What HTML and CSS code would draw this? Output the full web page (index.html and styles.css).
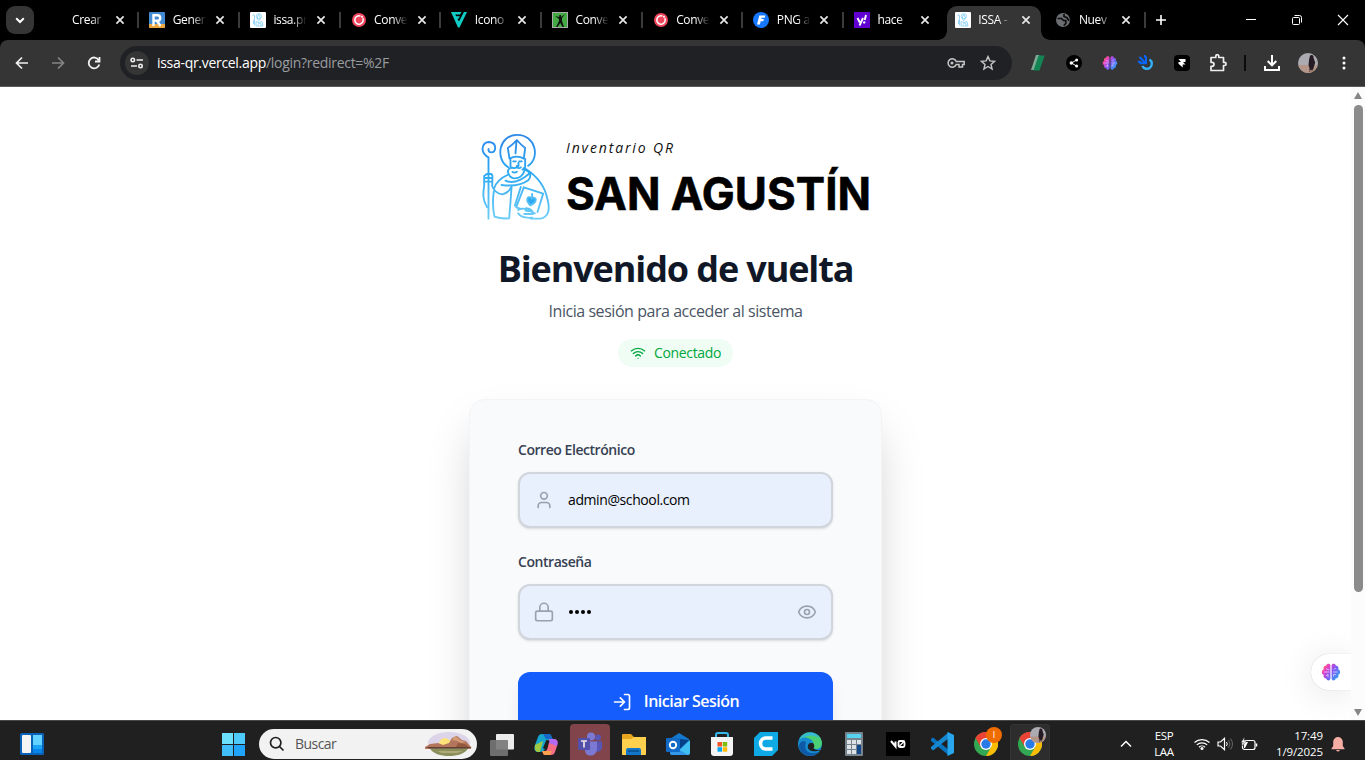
FILE: index.html
```html
<!DOCTYPE html>
<html lang="es">
<head>
<meta charset="utf-8">
<title>ISSA - Inventario QR</title>
<link rel="stylesheet" href="styles.css">
</head>
<body>
<svg class="defs" width="0" height="0" aria-hidden="true">
  <defs>
    <linearGradient id="brainFill" x1="0" y1=".1" x2="1" y2=".8"><stop offset="0" stop-color="#ff8a3c"/><stop offset=".25" stop-color="#ee3fc0"/><stop offset=".55" stop-color="#8457f5"/><stop offset="1" stop-color="#26a9f5"/></linearGradient>
    <linearGradient id="saintStroke" gradientUnits="userSpaceOnUse" x1="0" y1="15" x2="0" y2="275"><stop offset="0" stop-color="#2f86e8"/><stop offset=".45" stop-color="#2da9f3"/><stop offset="1" stop-color="#6dcdf6"/></linearGradient>
    <symbol id="close" viewBox="0 0 10 10"><path d="M1.4 1.4l7.2 7.2M8.6 1.4L1.4 8.6" stroke="#e8e8e8" stroke-width="1.7"/></symbol>
    <symbol id="issa" viewBox="0 0 16 16"><rect width="16" height="16" rx="1" fill="#fff"/><g fill="none" stroke="#7fcbf5" stroke-width=".8"><circle cx="8.800" cy="4.300" r="2.600"/><path d="M4.500 13.500V4c0-2-2-1.500-1.500 0M7.500 5l1.300-2.500 1.300 2.500v2.500L8.800 8.500 7.500 7.500zM6 9.500l3 1 3-1 1 4.500H6zM8 13l1-2 2.500 1-1 2M3.500 8v4"/></g></symbol>
    <symbol id="convert" viewBox="0 0 16 16"><circle cx="8" cy="8" r="7" fill="#f0455c"/><path d="M11.800 6.200A4.200 4.200 0 1 1 9.500 4.100" fill="none" stroke="#fff" stroke-width="1.500"/><circle cx="11" cy="4.800" r="1" fill="#fff"/></symbol>
    <symbol id="brain" viewBox="0 0 20 20"><path d="M9.400 3.200C8.500 1 5.600 1.300 5.200 3.400 2.900 3.500 1.900 5.500 2.800 7.200.2 8.500.3 11.700 2.600 12.700 2 15 3.500 16.400 5.200 16.500 6 19 8.800 19 9.400 16.700zM10.600 3.200C11.500 1 14.400 1.300 14.800 3.400 17.100 3.500 18.100 5.500 17.200 7.200 19.800 8.500 19.700 11.700 17.400 12.700 18 15 16.500 16.400 14.800 16.500 14 19 11.200 19 10.600 16.700z" fill="url(#brainFill)"/><path d="M3 10h5.400M5 6.500l2 1.200h1.400M5 13.800l2-1.500v3M12 10h4.500M12.800 7.500l2.200-1.500M12.500 14.500v-2h2.600" fill="none" stroke="#ddd3ff" stroke-width=".8"/></symbol>
    <symbol id="chrome" viewBox="0 0 24 24"><circle cx="12" cy="12" r="12" fill="#33a852"/><path d="M12 12L1.600 6A12 12 0 0 1 22.400 6z" fill="#ea4335"/><path d="M12 6h10.400A12 12 0 0 1 12 24l5.200-9z" fill="#fbbc04"/><path d="M1.600 6A12 12 0 0 1 22.400 6H12L6.800 15z" fill="#ea4335"/><circle cx="12" cy="12" r="6" fill="#fff"/><circle cx="12" cy="12" r="4.700" fill="#287ae6"/></symbol>
    <symbol id="avatar" viewBox="0 0 20 20"><circle cx="10" cy="10" r="10" fill="#adabb2"/><path d="M.4 12h19.200A10 10 0 0 1 10 20 10 10 0 0 1 .4 12z" fill="#b49688"/><path d="M12 2.500c2-1.500 4 0 3.500 2.200l1.700 4.800-1.200 4-1 3.500h-3l-1.500-5 .5-5z" fill="#251b24"/><path d="M11.500 16l.5 3M14 16v2.500" stroke="#684538"/></symbol>
    <symbol id="wifi" viewBox="0 0 24 24"><path d="M12 20h.01M2 8.820a15 15 0 0 1 20 0M5 12.859a10 10 0 0 1 14 0M8.500 16.429a5 5 0 0 1 7 0" fill="none" stroke="currentColor" stroke-width="2" stroke-linecap="round"/></symbol>
  </defs>
</svg>

<div class="screen">
  <header class="tabstrip">
    <button class="tab-search"><svg width="10" height="7" viewBox="0 0 10 7"><path d="M1.200 1.300L5 5l3.800-3.700" fill="none" stroke="#fff" stroke-width="2"/></svg></button>
    <div class="tabs">
      <div class="tab"><span class="fav"></span><span class="title">Crear</span><svg class="x"><use href="#close"/></svg></div>
      <div class="tab"><svg class="fav" viewBox="0 0 16 16"><rect width="16" height="16" rx="1" fill="#438bd2"/><path d="M0 12h16v3q0 1-1 1H1q-1 0-1-1z" fill="#eea640"/><path d="M4.500 14V3.200h4a2.700 2.700 0 0 1 0 5.400h-4M8 9l3.500 5" fill="none" stroke="#fff" stroke-width="2.400"/></svg><span class="title">Gener</span><svg class="x"><use href="#close"/></svg></div>
      <div class="tab"><svg class="fav"><use href="#issa"/></svg><span class="title">issa.pr</span><svg class="x"><use href="#close"/></svg></div>
      <div class="tab"><svg class="fav"><use href="#convert"/></svg><span class="title">Conve</span><svg class="x"><use href="#close"/></svg></div>
      <div class="tab"><svg class="fav" viewBox="0 0 16 16"><path d="M0 0h10.500L9 2.600H4.200l1 1.700h3.700L7.600 6.700H6.400L8 9.500 12.900 0H16L8.500 15.500H7z" fill="#12cdc6"/></svg><span class="title">Icono</span><svg class="x"><use href="#close"/></svg></div>
      <div class="tab"><svg class="fav" viewBox="0 0 16 16"><rect x=".5" y=".5" width="15" height="15" fill="#43aa43" stroke="#aaa"/><path d="M3 4l4 1 .5-2h1.500v2l4-3-3 4v3l2 6h-1.500L8.300 11 5.500 15H4l3-6V7z" fill="#111"/></svg><span class="title">Conve</span><svg class="x"><use href="#close"/></svg></div>
      <div class="tab"><svg class="fav"><use href="#convert"/></svg><span class="title">Conve</span><svg class="x"><use href="#close"/></svg></div>
      <div class="tab"><svg class="fav" viewBox="0 0 16 16"><circle cx="8" cy="8" r="8" fill="#1677ff"/><path d="M4 12.500L6.300 3.500h6l-.6 2.300H8.600L8.300 7h2.600l-.6 2.200H7.700l-.8 3.300z" fill="#fff"/></svg><span class="title">PNG a</span><svg class="x"><use href="#close"/></svg></div>
      <div class="tab"><svg class="fav" viewBox="0 0 16 16"><rect width="16" height="16" fill="#6001d2"/><path d="M3.500 6l2.300 4.500M9 6l-3.500 7.500M12 3l-1.300 5" stroke="#fff" stroke-width="1.900"/><circle cx="10.200" cy="10.400" r="1.200" fill="#fff"/></svg><span class="title">hace</span><svg class="x"><use href="#close"/></svg></div>
      <div class="tab active"><svg class="fav"><use href="#issa"/></svg><span class="title">ISSA -</span><svg class="x"><use href="#close"/></svg></div>
      <div class="tab"><svg class="fav" viewBox="0 0 16 16"><circle cx="8" cy="8" r="7" fill="#6a6d71"/><path d="M2.500 6.500h4l2 2h2.300v3l-2 2M9 2v2.500l3 1.200 2 3" fill="none" stroke="#0c0c0d" stroke-width="1.700"/></svg><span class="title">Nuev</span><svg class="x"><use href="#close"/></svg></div>
    </div>
    <button class="newtab"><svg width="12" height="12" viewBox="0 0 12 12"><path d="M6 1v10M1 6h10" stroke="#fff" stroke-width="1.600"/></svg></button>
    <div class="winctl">
      <svg viewBox="0 0 12 12"><path d="M1 5.500h10" stroke="#fff"/></svg>
      <svg viewBox="0 0 12 12"><rect x="1.500" y="3.500" width="7" height="7" rx="1" fill="none" stroke="#fff"/><path d="M3.500 1.500h5q2 0 2 2v5" fill="none" stroke="#fff"/></svg>
      <svg viewBox="0 0 12 12"><path d="M1 1l10 10M11 1L1 11" stroke="#fff" stroke-width="1.100"/></svg>
    </div>
  </header>

  <div class="toolbar">
    <div class="nav">
      <svg viewBox="0 0 16 16"><path d="M14 8H3M8 2.500L2.500 8 8 13.500" fill="none" stroke="#f1f1f1" stroke-width="1.700"/></svg>
      <svg viewBox="0 0 16 16"><path d="M2 8h11M8 2.500L13.500 8 8 13.500" fill="none" stroke="#858585" stroke-width="1.700"/></svg>
      <svg viewBox="0 0 16 16"><path d="M12.800 5.200A5.400 5.400 0 1 0 13.300 9.500M13.500 2v4.500H9" fill="none" stroke="#f1f1f1" stroke-width="1.800"/></svg>
    </div>
    <div class="omnibox">
      <span class="site"><svg width="14" height="12" viewBox="0 0 14 12"><g fill="none" stroke="#eee" stroke-width="1.600"><circle cx="2.800" cy="3" r="1.700"/><path d="M6.500 3H13M1 9h6"/><circle cx="10.500" cy="9" r="1.700"/></g></svg></span>
      <span class="url"><b>issa-qr.vercel.app</b>/login?redirect=%2F</span>
      <svg class="key" viewBox="0 0 18 10"><path d="M9.200 3.500A4.200 4.200 0 1 0 9.200 6.500H12V9h3.500V6.500H17.200v-3z" fill="none" stroke="#c4c7c5" stroke-width="1.500"/><circle cx="5" cy="5" r="1.500" fill="#c4c7c5"/></svg>
      <svg class="star" viewBox="0 0 16 16"><path d="M8 1.600l1.900 4.300 4.700.4-3.600 3.100 1.100 4.600L8 11.500 3.900 14 5 9.400 1.400 6.300l4.700-.4z" fill="none" stroke="#c4c7c5" stroke-width="1.400"/></svg>
    </div>
    <div class="exts">
      <svg viewBox="0 0 16 16"><path d="M6 0h3.500L4.500 15H1z" fill="#7ea993"/><path d="M8.500.5h6.200L9.500 15.500H3.500z" fill="#138454"/></svg>
      <svg viewBox="0 0 16 16"><circle cx="8" cy="8" r="8" fill="#000"/><path d="M10.500 5L5.500 8l5 3" fill="none" stroke="#fff"/><circle cx="10.600" cy="5" r="1.500" fill="#fff"/><circle cx="5.300" cy="8" r="1.700" fill="#fff"/><circle cx="10.600" cy="11" r="1.500" fill="#fff"/></svg>
      <svg><use href="#brain"/></svg>
      <svg viewBox="0 0 16 16"><path d="M11.500 4.600A5 5 0 1 1 4.300 11" fill="none" stroke="#32b0f8" stroke-width="2.400"/><path d="M1.500 2l6 6M6.500 0L8 3.500M0 6.500l3.500 1.200M1.500 8.300H8V1.500" fill="none" stroke="#0967ff" stroke-width="2"/></svg>
      <svg viewBox="0 0 16 16"><rect width="16" height="16" rx="4" fill="#000"/><path d="M4.500 4h7v3H9l2.500 2.500H8.700v3L4.500 8.700V7H7z" fill="#fff"/></svg>
      <svg viewBox="0 0 18 18"><path d="M2 3.500h4.800V2.200a1.500 1.500 0 0 1 3 0v1.300h4.700v4.800h1a1.600 1.600 0 0 1 0 3.200h-1v5H2v-4.200h1a2 2 0 0 0 0-4H2z" fill="none" stroke="#eee" stroke-width="1.700" stroke-linejoin="round"/></svg>
    </div>
    <span class="bar"></span>
    <svg class="dl" viewBox="0 0 16 16"><path d="M8 0v10M3.700 6L8 10.300 12.300 6M1 11v4h14v-4" fill="none" stroke="#fff" stroke-width="2"/></svg>
    <svg class="me"><use href="#avatar"/></svg>
    <svg class="kebab" viewBox="0 0 4 16"><g fill="#fff"><circle cx="2" cy="3" r="1.500"/><circle cx="2" cy="8" r="1.500"/><circle cx="2" cy="13" r="1.500"/></g></svg>
  </div>

  <div class="viewport">
    <main class="page">
      <svg class="logo" width="396" height="92" viewBox="0 0 396 92" role="img" aria-label="Inventario QR San Agustín">
        <g transform="translate(-3.500 -4) scale(.3333)" fill="none" stroke="url(#saintStroke)" stroke-width="5.600" stroke-linecap="round" stroke-linejoin="round">
          <path d="M98 118C58 92 70 21 125 20.500c55 0 70 68 33 93"/>
          <path d="M102 92L97 60Q113 49 124 36q12 14 25 24l-4 32Q124 80 102 92zM123 38l-3 38"/>
          <path d="M105 95v22M149 93v24l-8 8M113 100h8M131 100h8M129 104v10h-5M97 132q1-12 13-13 7 3 13-1 8 5 13 0M97 132q5 17 18 19 25 1 33-26M111 132q7 4 13-1"/>
          <path d="M39 272V88Q22 80 21 62q2-20 20-20 18 2 18 17 0 14-12 14-9-1-8-10"/>
          <path d="M26 174V144l8-6h14l3 6-1 30M28 150h20M29 161h20M26 176q-8 35 9 62M50 174q8 22 30 25 20-4 28-23"/>
          <path d="M96 141q-32 14-40 40M55 190q-6 40 2 76 20 7 44 5 4-46 7-93"/>
          <path d="M150 122q55 35 66 92 13 50-20 58h-30M148 124q26 12 11 32-28 22-81 15M160 138q-40 34-70 20"/>
          <path d="M145 178l58 19-17 55M145 178l-23 60 14 5M136 177l-18 56M150 248l10 2"/>
          <path d="M128 246q16-9 34 2l16 8M128 256q10 16 42 13M146 258h26M150 241q12-1 20 8"/>
          <path d="M164 232q-14-16-6-24 8-2 11 4 8-6 12 2-1 12-17 18zM170 198v8" fill="#2da9f3"/>
        </g>
        <text class="logo-sub" x="87" y="21" textLength="107">Inventario QR</text>
        <text class="logo-name" x="87" y="78" textLength="305" lengthAdjust="spacingAndGlyphs">SAN AGUSTÍN</text>
      </svg>
      <h1>Bienvenido de vuelta</h1>
      <p class="lead">Inicia sesión para acceder al sistema</p>
      <div class="status"><svg><use href="#wifi"/></svg><span>Conectado</span></div>

      <form class="card">
        <label>Correo Electrónico</label>
        <div class="field">
          <svg class="ficon" viewBox="0 0 24 24"><path d="M19 21v-2a4 4 0 0 0-4-4H9a4 4 0 0 0-4 4v2"/><circle cx="12" cy="7" r="4"/></svg>
          <span class="value">admin@school.com</span>
        </div>
        <label>Contraseña</label>
        <div class="field">
          <svg class="ficon" viewBox="0 0 24 24"><rect x="2" y="11" width="20" height="11.500" rx="2"/><path d="M7 11V6.500a5 5 0 0 1 10 0V11"/></svg>
          <span class="value dots"><i></i><i></i><i></i><i></i></span>
          <svg class="ficon" viewBox="0 0 24 24"><path d="M2.062 12.348a1 1 0 0 1 0-.696 10.750 10.750 0 0 1 19.876 0 1 1 0 0 1 0 .696 10.750 10.750 0 0 1-19.876 0"/><circle cx="12" cy="12" r="3"/></svg>
        </div>
        <div class="submit">
          <svg viewBox="0 0 24 24"><path d="M10 17l5-5-5-5M15 12H3M15 3h4a2 2 0 0 1 2 2v14a2 2 0 0 1-2 2h-4"/></svg>
          <span>Iniciar Sesión</span>
        </div>
      </form>
      <div class="assistant"><svg width="20" height="20"><use href="#brain"/></svg></div>
    </main>
    <div class="scroll"><i class="up"></i><i class="thumb"></i><i class="down"></i></div>
  </div>

  <footer class="taskbar">
    <svg class="widgets" viewBox="0 0 24 22"><rect width="24" height="22" rx="1.500" fill="#0762b8"/><rect x="2" y="2" width="9" height="18" rx="1" fill="#f4f4f4"/><path d="M13 2h9v10h-9z" fill="#64d2ff"/><path d="M13 12h9v4h-9z" fill="#1ba4f5"/><path d="M13 16h9v4h-9z" fill="#0884ea"/></svg>
    <svg class="start" viewBox="0 0 23 23"><path d="M0 0h11v11H0z" fill="#6be1fb"/><path d="M12 0h11v11H12z" fill="#4dcafa"/><path d="M0 12h11v11H0z" fill="#3fbef9"/><path d="M12 12h11v11H12z" fill="#20a3fa"/></svg>
    <div class="search">
      <svg class="mag" viewBox="0 0 16 16"><circle cx="6.700" cy="6.700" r="5.200"/><path d="M10.500 10.500l4 4"/></svg>
      <span>Buscar</span>
      <svg class="scene" viewBox="0 0 48 25"><ellipse cx="24" cy="11" rx="21" ry="11" fill="#dcd4e8"/><circle cx="20" cy="12" r="6" fill="#ffe179"/><path d="M0 15l5-3 8-1 5 2 6-2 3-5 5-2 5 4 4 1 5 6v2H0z" fill="#b3765c"/><path d="M27 8l3-4 3 2 2 2 6 2-5 1-4-2z" fill="#d39a76"/><path d="M33 11l7 1 4 3H31z" fill="#94583f"/><path d="M1 15h46l-6 2H6z" fill="#633e37"/><path d="M5 16.500h38c-5 10-33 10-38 0z" fill="#8a8f5b"/><path d="M12 19h26l-6 2H17z" fill="#b0aa78"/></svg>
    </div>
    <div class="apps">
      <span><svg viewBox="0 0 24 24"><rect x="6" y="2" width="18" height="15.500" rx="1" fill="#ececec"/><rect y="8" width="18" height="16" rx="1" fill="#777" opacity=".9"/></svg></span>
      <span><svg viewBox="0 0 24 24"><path d="M8 2h7c3 0 2 4 4 5l-5 1-3 9c-1 2-3 3-5 3H4c-4 0-4-4-3-7l3-8q1-3 4-3z" fill="#16a5cc"/><path d="M9 2h6c3 0 2 4 4 5h-7z" fill="#1567c8"/><path d="M1 13l8-4-3 11H4q-4 0-3-7z" fill="#9dc943"/><path d="M15 7h5c4 0 4 4 3 7l-2 6q-1 3-4 3h-6c-2 0-2-3-3-4h3c2 0 2-2 3-4z" fill="#f66e85"/><path d="M15 7h5c4 0 4 4 3 7l-8-3z" fill="#b36af2"/><path d="M8 19h10l-2 4h-5c-2 0-2-3-3-4z" fill="#ffa24d"/><path d="M14 8.500l-3.500 8.500" stroke="#202020" stroke-width="3.500"/></svg></span>
      <span class="alert"><svg viewBox="0 0 24 24"><circle cx="13" cy="4.500" r="4" fill="#7b83eb"/><circle cx="20" cy="5.500" r="3" fill="#5059c9"/><path d="M16 9.500h8v6q-1 5-6 4z" fill="#5059c9"/><path d="M7 9.500h12v8q-1 6-6.500 6T7 18z" fill="#7b83eb"/><rect y="6" width="12" height="12" rx="1" fill="#4b53bc"/><path d="M3 9h6M6 9v6.500" stroke="#fff" stroke-width="1.700"/></svg></span>
      <span><svg viewBox="0 0 24 24"><path d="M0 3q0-1 1-1h8l3 3h11q1 0 1 1v16q0 1-1 1H1q-1 0-1-1z" fill="#e8a51f"/><path d="M0 7h9l3-2h12v17q0 1-1 1H1q-1 0-1-1z" fill="#ffd04d"/><path d="M4 23v-5q0-2 2-2h11q2 0 2 2v5z" fill="#1377c9"/><path d="M6 19h11" stroke="#0b4b8c" stroke-width="1.500"/></svg></span>
      <span><svg viewBox="0 0 24 24"><path d="M4 7l9-6 10 6v14q0 2-2 2H6q-2 0-2-2z" fill="#1479ce"/><path d="M13 7l10 1-9 9z" fill="#063f87"/><path d="M24 8v13q0 2-2 2H8z" fill="#42bff2"/><path d="M4 12l18 11H6q-2 0-2-2z" fill="#3297e8"/><rect y="6" width="14" height="14" rx="1" fill="#116bc6"/><circle cx="7" cy="13" r="3.200" fill="none" stroke="#fff" stroke-width="1.900"/></svg></span>
      <span><svg viewBox="0 0 24 24"><path d="M6 6V3q0-2 2-2h8q2 0 2 2v3" fill="none" stroke="#35b9ec" stroke-width="2"/><path d="M1 5h22v16q0 3-3 3H4q-3 0-3-3z" fill="#f4f4f4"/><path d="M7.500 10H12v4.500H7.500z" fill="#f35325"/><path d="M12.700 10h4.500v4.500h-4.500z" fill="#81bc06"/><path d="M7.500 15.200H12v4.500H7.500z" fill="#05a6f0"/><path d="M12.700 15.200h4.500v4.500h-4.500z" fill="#ffba08"/></svg></span>
      <span><svg viewBox="0 0 24 24"><path d="M6 0h18v18l-6 6H0V6z" fill="#0fa9e6"/><path d="M18.500 6H12a5.500 5.500 0 0 0 0 11h6.500" fill="none" stroke="#fff" stroke-width="3.500"/></svg></span>
      <span><svg viewBox="0 0 24 24"><circle cx="12" cy="12" r="12" fill="#168bcd"/><path d="M2 6C7-3 23-1 24 11q0 5-5 6-6 0-4-4c2-5-6-9-13-7z" fill="#4bcf75"/><path d="M1 8C7-2 19 0 21 6 14 1 7 4 1 8z" fill="#35b9dc"/><path d="M8 10c-3 8 3 14 12 10-5 7-17 4-19-5 0-4 3-7 7-5z" fill="#0d59a5"/><path d="M15 11c4 5-3 5 4 7h5l-5 1c-10 2-11-6-7-8z" fill="#202020"/></svg></span>
      <span><svg viewBox="0 0 24 24"><rect x="3" width="18" height="24" rx="1" fill="#77838c"/><path d="M5 2h14v4H5z" fill="#55d3ef"/><path d="M5 8h4v4H5zM10 8h4v4h-4zM15 8h4v4h-4zM5 13h4v4H5zM10 13h4v4h-4zM5 18h4v4H5zM10 18h4v4h-4z" fill="#dce2e6"/><path d="M15 13h4v9h-4z" fill="#12488a"/></svg></span>
      <span><svg viewBox="0 0 24 24"><path d="M0 0h24v24H0z" fill="#000"/><path d="M5 9l4.500 5.500V9.500" fill="none" stroke="#fff" stroke-width="2"/><rect x="12.500" y="9" width="6" height="6" rx="1.500" fill="none" stroke="#fff" stroke-width="1.800"/><path d="M13 14.500l5-5" stroke="#fff" stroke-width="1.300"/></svg></span>
      <span><svg viewBox="0 0 24 24"><path d="M1 7l2-1.500L19 18v5.500L1 9z" fill="#0873be"/><path d="M1 16.500L3 18.500 19 6V0L1 15z" fill="#1688d0"/><path d="M17.500 0L24 3v18l-6.500 3z" fill="#28a7ee"/></svg></span>
      <span><svg><use href="#chrome"/></svg><em class="badge orange">I</em></span>
      <span class="current"><svg><use href="#chrome"/></svg><em class="badge"><svg><use href="#avatar"/></svg></em></span>
    </div>
    <div class="tray">
      <svg class="chev" viewBox="0 0 12 8"><path d="M1 6.500L6 1.500l5 5" fill="none" stroke="#fff" stroke-width="1.500"/></svg>
      <span class="lang">ESP<br>LAA</span>
      <svg class="wifi" viewBox="0 0 16 12"><g fill="none" stroke="#fff" stroke-width="1.200"><path d="M.5 4.500a11 11 0 0 1 15 0M2.800 6.900a7.500 7.500 0 0 1 10.400 0M5 9.200a4.300 4.300 0 0 1 6 0"/></g><circle cx="8" cy="10.500" r="1.500" fill="#fff"/></svg>
      <svg class="vol" viewBox="0 0 16 14"><path d="M1 5h2.500L7.500 1.300v11.400L3.500 9H1z" fill="none" stroke="#fff" stroke-width="1.200"/><path d="M9.500 5q1.500 2 0 4" fill="none" stroke="#fff"/><path d="M11.500 3q3 4 0 8M13.500 1.500q4 5.500 0 11" fill="none" stroke="#666"/></svg>
      <svg class="bat" viewBox="0 0 17 14"><rect x="1.500" y="3.500" width="12.500" height="9" rx="2" fill="none" stroke="#fff" stroke-width="1.200"/><path d="M15.500 6.500v3" stroke="#fff" stroke-width="1.500"/><path d="M3 5h4l-3 6H3z" fill="#fff"/><path d="M3.500 0L0 5.500h2.300L1.500 9 5.500 4H3z" fill="#fff" stroke="#202020" stroke-width=".4"/></svg>
      <span class="clock">17:49<br>1/9/2025</span>
      <svg class="bell" viewBox="0 0 14 15"><path d="M7 0a4.800 4.800 0 0 0-4.800 4.800V9L.5 11.500v.7h13v-.7L11.800 9V4.800A4.800 4.800 0 0 0 7 0zM5 13h4q-2 3-4 0z" fill="#f6ada3"/></svg>
    </div>
  </footer>
</div>
</body>
</html>
```
FILE: styles.css
```css
* { box-sizing: border-box; }
body { margin: 0; overflow: hidden; font-family: "Open Sans", "Noto Sans", sans-serif; }
svg { display: block; flex: none; }
.defs { position: absolute; }
button { border: 0; padding: 0; background: none; display: flex; align-items: center; justify-content: center; }
.screen { width: 1365px; height: 760px; display: flex; flex-direction: column; background: #000; }

/* tab strip */
.tabstrip { height: 40px; flex: none; display: flex; align-items: center; padding-left: 6px; background: #000; }
.tab-search { width: 28px; height: 28px; border-radius: 9px; background: #353535; flex: none; }
.tabs { display: flex; height: 40px; margin-left: 3.5px; flex: none; }
.tab { width: 100.700px; height: 40px; display: flex; align-items: center; padding-left: 11px; position: relative; }
.tab::after { content: ""; position: absolute; right: -1px; top: 12px; width: 2px; height: 16px; background: #3b3b3b; }
.fav { width: 16px; height: 16px; flex: none; }
.title { width: 35px; margin-left: 7.500px; white-space: nowrap; font-size: 12px; line-height: 20px; letter-spacing: -.35px; color: #fff; -webkit-mask-image: linear-gradient(90deg, #000 55%, transparent 96%); mask-image: linear-gradient(90deg, #000 55%, transparent 96%); }
.x { width: 10px; height: 10px; margin-left: 7.500px; }
.tab.active::before { content: ""; position: absolute; left: 3px; right: 3px; top: 6px; bottom: 0; border-radius: 10px 10px 0 0; background: #353535; }
.tab.active > * { position: relative; }
.tab.active::after { left: -6px; right: -6px; top: auto; bottom: 0; width: auto; height: 9px; background: radial-gradient(circle at 0 0, transparent 8.500px, #353535 9px) left bottom / 9px 9px no-repeat, radial-gradient(circle at 100% 0, transparent 8.500px, #353535 9px) right bottom / 9px 9px no-repeat; }
.tab:has(+ .active)::after { display: none; }
.newtab { width: 34px; height: 34px; margin-left: -1px; }
.winctl { margin-left: auto; display: flex; gap: 34px; padding-right: 16px; }
.winctl svg { width: 12px; height: 12px; }

/* toolbar */
.toolbar { height: 47px; flex: none; display: flex; align-items: center; background: #353535; border-bottom: 1px solid #5a5a5a; border-radius: 8px 8px 0 0; }
.nav { width: 120px; display: flex; gap: 20px; padding-left: 14px; flex: none; }
.nav svg { width: 16px; height: 16px; }
.omnibox { width: 892px; height: 34px; border-radius: 17px; background: #202124; display: flex; align-items: center; padding: 0 16px 0 5px; flex: none; }
.site { width: 24px; height: 24px; border-radius: 50%; background: #353535; display: flex; align-items: center; justify-content: center; }
.url { margin-left: 8px; flex: 1; padding-bottom: 2px; font-size: 14px; letter-spacing: -.3px; color: #9a9da1; }
.url b { font-weight: 400; color: #fff; }
.key { width: 18px; height: 10px; }
.star { width: 16px; height: 16px; margin-left: 15px; }
.exts { display: flex; gap: 18px; margin-left: 17px; align-items: center; }
.exts svg { width: 18px; height: 16px; }
.exts svg:last-child { height: 18px; }
.bar { width: 2px; height: 16px; margin-left: 17px; background: #0b0b0b; }
.dl { width: 16px; height: 16px; margin-left: 18px; }
.me { width: 20px; height: 20px; margin-left: 18px; }
.kebab { width: 4px; height: 16px; margin-left: 24px; }

/* page */
.viewport { height: 633px; flex: none; display: flex; background: #fff; overflow: hidden; }
.page { width: 1351px; height: 633px; overflow: hidden; display: flex; flex-direction: column; align-items: center; padding-top: 45px; background: #fff; position: relative; }
.logo { margin-left: 2px; flex: none; }
.logo-sub { font: italic 400 14px "Open Sans", sans-serif; fill: #111; }
.logo-name { font: 700 45px Inter, sans-serif; fill: #000; stroke: #000; stroke-width: .6px; }
h1 { margin: 22px 0 0; font-size: 36px; line-height: 45px; font-weight: 700; letter-spacing: -1.120px; color: #101828; white-space: nowrap; }
.lead { margin: 8px 0 0; font-size: 16px; line-height: 24px; letter-spacing: -.450px; color: #4a5565; }
.status { margin-top: 16px; width: 115px; height: 28px; border-radius: 14px; background: #f0fdf4; color: #00a63e; font-size: 14px; letter-spacing: -.35px; display: flex; align-items: center; padding-left: 12px; gap: 8px; flex: none; }
.status svg { width: 16px; height: 16px; }
.status span { padding-bottom: 2px; }
.card { width: 413px; height: 420px; flex: none; margin: 32px 0 0; padding: 40px 48px; border: 1px solid #f3f4f6; border-radius: 16px; background: #f9fafb; box-shadow: 0 25px 50px -12px rgba(0, 0, 0, .25); }
.card label { display: block; height: 20px; margin-bottom: 12px; font-size: 14px; line-height: 20px; font-weight: 600; letter-spacing: -.450px; color: #364153; }
.field { height: 56px; margin-bottom: 24px; border: 2px solid #d1d5dc; border-radius: 12px; background: #e8f0fe; box-shadow: 0 1px 3px rgba(0, 0, 0, .1), 0 1px 2px -1px rgba(0, 0, 0, .1); display: flex; align-items: center; padding: 0 14px; }
.ficon { width: 20px; height: 20px; fill: none; stroke: #99a1af; stroke-width: 2; stroke-linecap: round; stroke-linejoin: round; }
.value { flex: 1; margin-left: 14px; padding-bottom: 2px; font-size: 14px; letter-spacing: -.4px; color: #000; }
.dots { display: flex; gap: 2px; padding: 0 0 0 1px; }
.dots i { width: 4px; height: 4px; border-radius: 50%; background: #000; }
.submit { height: 60px; margin-top: 32px; border-radius: 12px; background: #155dfc; color: #fff; display: flex; align-items: center; justify-content: center; gap: 12px; font-size: 16px; font-weight: 600; letter-spacing: -.5px; box-shadow: 0 10px 15px -3px rgba(0, 0, 0, .1); }
.submit span { padding-bottom: 2px; }
.submit svg { width: 20px; height: 20px; fill: none; stroke: #fff; stroke-width: 2; stroke-linecap: round; stroke-linejoin: round; }
.assistant { position: absolute; right: 0; top: 567px; width: 40px; height: 36px; border-radius: 18px 0 0 18px; background: #fff; display: flex; align-items: center; justify-content: center; box-shadow: 0 0 1px rgba(0, 0, 0, .25), 0 4px 35px rgba(0, 0, 0, .11); }
.scroll { width: 14px; background: #fcfcfc; display: flex; flex-direction: column; align-items: center; padding: 5px 0 4px; }
.up, .down { border: 4.500px solid transparent; height: 0; }
.up { border-top: 0; border-bottom: 7px solid #868686; }
.down { border-bottom: 0; border-top: 7px solid #868686; margin-top: auto; }
.thumb { width: 9px; height: 487px; margin-top: 6px; border-radius: 5px; background: #8b8b8b; }

/* taskbar */
.taskbar { height: 40px; flex: none; display: flex; align-items: center; background: #202020; border-top: 1px solid #484848; padding: 7px 0 0 20px; overflow: hidden; }
.widgets { width: 24px; height: 22px; }
.start { width: 23px; height: 23px; margin-left: 178px; }
.search { width: 218px; height: 30px; margin-left: 14px; border-radius: 15px; background: #f2f2f2; display: flex; align-items: center; padding: 0 4px 0 10px; flex: none; }
.mag { width: 16px; height: 16px; fill: none; stroke: #1f1f1f; stroke-width: 1.700; }
.search span { margin-left: 10px; flex: 1; padding-bottom: 1px; font-size: 14px; letter-spacing: -.55px; color: #555; }
.scene { width: 48px; height: 25px; }
.apps { display: flex; margin-left: 5px; flex: none; }
.apps > span { width: 40px; margin-right: 4px; height: 40px; display: flex; align-items: center; justify-content: center; position: relative; border-radius: 4px; }
.apps > span > svg { width: 24px; height: 24px; }
.alert { background: #81444a; }
.alert svg { opacity: .85; }
.current { background: #2d2d2d; box-shadow: inset 0 0 0 1px #343434; }
.badge { position: absolute; top: 3px; right: 4px; width: 16px; height: 16px; border-radius: 50%; font-size: 9px; line-height: 16px; text-align: center; font-style: normal; color: #fff; }
.orange { background: #ef6c00; }
.badge svg { width: 16px; height: 16px; }
.tray { margin-left: auto; display: flex; align-items: center; color: #fff; font-size: 11.500px; line-height: 16px; letter-spacing: -.1px; padding-right: 20px; }
.chev { width: 12px; height: 8px; }
.lang { width: 30px; margin-left: 17px; text-align: center; letter-spacing: -.3px; }
.wifi { width: 16px; height: 12px; margin-left: 15px; }
.vol { width: 16px; height: 14px; margin-left: 7px; }
.bat { width: 17px; height: 14px; margin-left: 8px; }
.clock { width: 58px; margin-left: 7px; text-align: right; }
.bell { width: 14px; height: 15px; margin-left: 8px; }
```
